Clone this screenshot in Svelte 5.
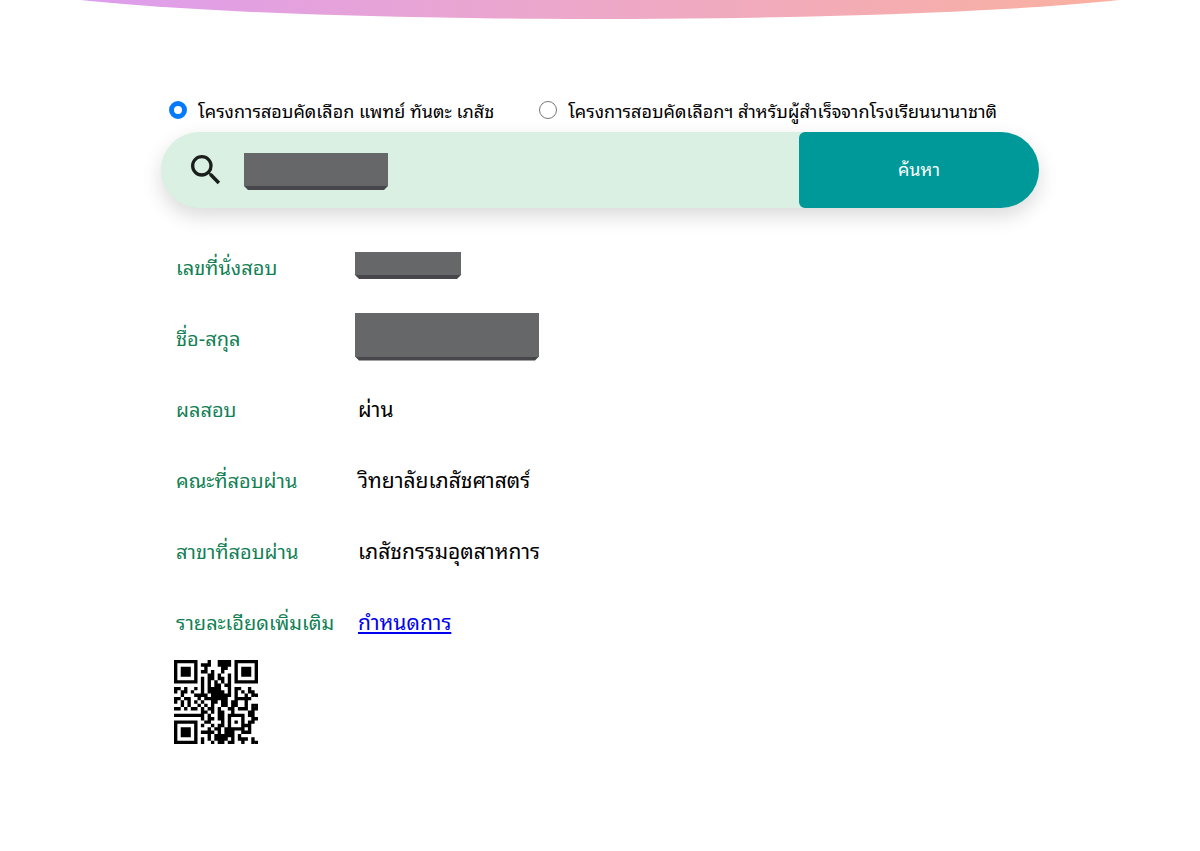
<script>
  let project = $state("thai");
  let query = $state("");

  const projects = [
    { id: "thai", label: "โครงการสอบคัดเลือก แพทย์ ทันตะ เภสัช" },
    { id: "inter", label: "โครงการสอบคัดเลือกฯ สำหรับผู้สำเร็จจากโรงเรียนนานาชาติ" }
  ];

  const results = [
    { label: "เลขที่นั่งสอบ", hidden: "seat" },
    { label: "ชื่อ-สกุล", hidden: "name" },
    { label: "ผลสอบ", value: "ผ่าน" },
    { label: "คณะที่สอบผ่าน", value: "วิทยาลัยเภสัชศาสตร์" },
    { label: "สาขาที่สอบผ่าน", value: "เภสัชกรรมอุตสาหการ" },
    { label: "รายละเอียดเพิ่มเติม", value: "กำหนดการ", href: "#schedule" }
  ];

  // one string per row, # is a dark module
  const qr = [
    "#######...#..####.#######",
    "#.....#.###..####.#.....#",
    "#.###.#..#....##..#.###.#",
    "#.###.#.##.#..#...#.###.#",
    "#.###.#...##.#..#.#.###.#",
    "#.....#.#.##.##.#.#.....#",
    "#######.#.#.#.#.#.#######",
    "........#.#.##.##........",
    "##.#..#.#.####..#.##..#..",
    "#.##.#..#.#####.#.#.#.##.",
    "..#...####.######.#..#.##",
    "##.##..#.#######..#####..",
    "#.#.#.#.#..##.##.##..#...",
    "..#.#..#.#.#..##.##..#.##",
    "##.#.##.#.##.#..##.###.##",
    "........##.#.##..#....##.",
    "#########.#..##.#####.##.",
    "........#.##.##.#...#..##",
    "#######..##...#.#.#.#.##.",
    "#.....#.#..#.##.#...###..",
    "#.###.#...#.##.######.#..",
    "#.###.#.####.#.###..###..",
    "#.###.#...#.######.#.....",
    "#.....#.#.#.####.#.###.#.",
    "#######.#..#.##.##..#..##"
  ];
  const modules = qr
    .map((row, y) => [...row].map((c, x) => (c == "#" ? `M${x} ${y}h1v1h-1z` : "")).join(""))
    .join("");
</script>

<header><div class="hero"></div></header>

<main>
  <form onsubmit={e => e.preventDefault()}>
    <div class="projects">
      {#each projects as p}
        <label>
          <input type="radio" name="project" value={p.id} bind:group={project} />
          {p.label}
        </label>
      {/each}
    </div>
    <div class="search">
      <svg class="icon" viewBox="0 0 24 24" fill="#1a1f1c" aria-hidden="true">
        <path d="M15.5 14h-.79l-.28-.27A6.47 6.47 0 0 0 16 9.5 6.5 6.5 0 1 0 9.5 16c1.61 0 3.09-.59 4.23-1.57l.27.28v.79l5 4.99L20.49 19l-4.99-5zm-6 0C7.01 14 5 11.99 5 9.5S7.01 5 9.5 5 14 7.01 14 9.5 11.99 14 9.5 14z" />
      </svg>
      <span class="mask query"></span>
      <input type="text" aria-label="ค้นหา" bind:value={query} />
      <button type="submit">ค้นหา</button>
    </div>
  </form>

  <table>
    <tbody>
      {#each results as r}
        <tr>
          <th scope="row">{r.label}</th>
          <td>
            {#if r.hidden}
              <span class="mask {r.hidden}"></span>
            {:else if r.href}
              <a href={r.href}>{r.value}</a>
            {:else}
              {r.value}
            {/if}
          </td>
        </tr>
      {/each}
    </tbody>
  </table>

  <svg class="qr" viewBox="0 0 25 25" role="img" aria-label="QR">
    <path d={modules} />
  </svg>
</main>

<style>
  :global(body) {
    margin: 0;
    background: #fff;
    color: #000;
    font-family: Thonburi, "Noto Sans Thai Looped", "Noto Looped Thai", Loma, Waree, Garuda, "Liberation Sans", sans-serif;
  }

  header {
    height: 19px;
    overflow: hidden;
  }

  .hero {
    height: 76px;
    margin-top: -57px;
    border-radius: 50%;
    background: linear-gradient(90deg, #db9bf3, #eda8c8 50%, #fcb299);
  }

  main {
    max-width: 878px;
    margin: 0 auto;
    padding: 72px 16px 40px;
  }

  .projects {
    display: flex;
    gap: 45px;
    height: 38px;
    padding: 0 0 3px 8px;
    align-items: center;
  }

  label {
    display: flex;
    align-items: center;
    gap: 11px;
    font-size: 18px;
    white-space: nowrap;
  }

  input[type="radio"] {
    appearance: none;
    box-sizing: border-box;
    width: 18px;
    height: 18px;
    margin: 0;
    border: 1px solid #777;
    border-radius: 50%;
  }

  input[type="radio"]:checked {
    border: 5px solid #057aff;
  }

  .search {
    display: flex;
    align-items: center;
    height: 76px;
    border-radius: 38px;
    background: #d9f0e3;
    box-shadow: 0 8px 20px rgba(0, 0, 0, 0.15);
  }

  .icon {
    width: 40px;
    height: 40px;
    margin: 0 18px 0 25px;
  }

  .search input {
    flex: 1;
    min-width: 0;
    height: 100%;
    border: 0;
    outline: 0;
    background: none;
    font: inherit;
    font-size: 21px;
  }

  button {
    width: 240px;
    height: 100%;
    padding: 0 0 4px;
    border: 0;
    border-radius: 6px 38px 38px 6px;
    background: #009999;
    color: #fff;
    font: inherit;
    font-size: 18px;
  }

  .mask {
    display: block;
    flex: none;
    background: linear-gradient(#666769, #666769) top / 100% calc(100% - 4px) no-repeat, #47474b;
    clip-path: polygon(0 0, 100% 0, 100% calc(100% - 4px), calc(100% - 4px) 100%, 4px 100%, 0 calc(100% - 4px));
  }

  .query {
    width: 144px;
    height: 37px;
    margin-top: 3px;
  }

  .seat {
    width: 106px;
    height: 27px;
  }

  .name {
    width: 184px;
    height: 48px;
  }

  table {
    margin-top: 22px;
    border-collapse: collapse;
  }

  tr {
    height: 71px;
  }

  th {
    width: 178px;
    padding: 0 0 0 15px;
    text-align: left;
    font-size: 20px;
    font-weight: 400;
    color: #137f55;
    white-space: nowrap;
  }

  td {
    padding: 0 4px;
    font-size: 21px;
  }

  td .mask {
    margin-left: -3px;
  }

  a {
    color: #0000ee;
  }

  .qr {
    display: block;
    width: 84px;
    height: 84px;
    margin: 4px 0 0 13px;
  }
</style>
